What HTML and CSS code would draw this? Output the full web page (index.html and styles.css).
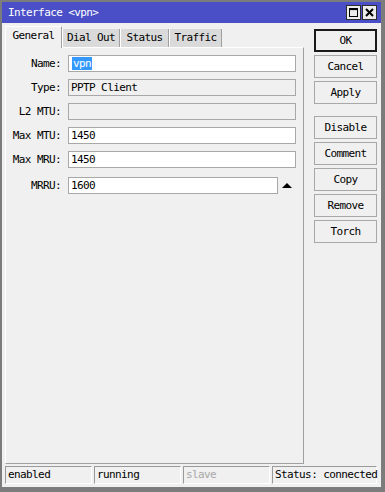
FILE: index.html
```html
<!DOCTYPE html>
<html lang="en">
<head>
    <meta charset="UTF-8">
    <title>Interface &lt;vpn&gt;</title>
    <link rel="stylesheet" href="styles.css">
</head>
<body>
    <div class="window">
        <div class="titlebar">
            <span class="title">Interface &lt;vpn&gt;</span>
            <span class="tb-btn">
                <svg width="13" height="13" viewBox="0 0 13 13">
                    <rect x="2.5" y="2.5" width="8" height="8" fill="none" stroke="#000" stroke-width="1"/>
                    <line x1="2" y1="3.5" x2="11" y2="3.5" stroke="#000" stroke-width="1.2"/>
                </svg>
            </span>
            <span class="tb-btn">
                <svg width="13" height="13" viewBox="0 0 13 13">
                    <path d="M3 3 L10 10 M10 3 L3 10" stroke="#000" stroke-width="2"/>
                </svg>
            </span>
        </div>
        <div class="content">
            <div class="main">
                <div class="left">
                    <div class="tabs">
                        <div class="tab active">General</div>
                        <div class="tab">Dial Out</div>
                        <div class="tab">Status</div>
                        <div class="tab">Traffic</div>
                    </div>
                    <div class="panel">
                        <div class="form">
                            <label>Name:</label>
                            <div class="field"><span class="sel">vpn</span></div>
                            <label>Type:</label>
                            <div class="field ro">PPTP Client</div>
                            <label>L2 MTU:</label>
                            <div class="field ro"></div>
                            <label>Max MTU:</label>
                            <div class="field">1450</div>
                            <label>Max MRU:</label>
                            <div class="field">1450</div>
                            <label class="gap">MRRU:</label>
                            <div class="gap mrru">
                                <div class="field">1600</div>
                                <span class="arrow-box"><span class="arrow"></span></span>
                            </div>
                        </div>
                    </div>
                </div>
                <div class="buttons">
                    <button class="btn default">OK</button>
                    <button class="btn">Cancel</button>
                    <button class="btn">Apply</button>
                    <button class="btn group">Disable</button>
                    <button class="btn">Comment</button>
                    <button class="btn">Copy</button>
                    <button class="btn">Remove</button>
                    <button class="btn">Torch</button>
                </div>
            </div>
            <div class="statusbar">
                <div class="cell">enabled</div>
                <div class="cell">running</div>
                <div class="cell dim">slave</div>
                <div class="cell wide">Status: connected</div>
            </div>
        </div>
    </div>
</body>
</html>
```

FILE: styles.css
```css
body {
    margin: 0;
    font-family: "DejaVu Sans Mono", "Liberation Mono", monospace;
    font-size: 11px;
    letter-spacing: -0.6px;
    color: #000;
    background: #fff;
}
.window {
    width: 385px;
    height: 492px;
    box-sizing: border-box;
    border: 2px solid #7c7c7c;
    border-right-width: 4px;
    border-bottom-width: 5px;
    background: #f0f0f0;
    display: flex;
    flex-direction: column;
}
.titlebar {
    height: 21px;
    background: #4b4fc7;
    color: #fff;
    display: flex;
    align-items: center;
    gap: 1px;
    padding: 0 4px 0 6px;
}
.title {
    margin-right: auto;
}
.tb-btn {
    width: 15px;
    height: 15px;
    box-sizing: border-box;
    border: 1px solid #2e2e2e;
    background: #ececec;
    display: flex;
}
.content {
    flex: 1;
    display: flex;
    flex-direction: column;
    padding: 3px 4px 3px 3px;
}
.main {
    flex: 1;
    display: flex;
    gap: 10px;
}
.left {
    width: 299px;
    display: flex;
    flex-direction: column;
}
.tabs {
    height: 21px;
    display: flex;
    align-items: flex-end;
}
.tab {
    height: 18px;
    box-sizing: border-box;
    line-height: 17px;
    background: #dadada;
    border-left: 1px solid #fff;
    border-right: 1px solid #a0a0a0;
    text-align: center;
}
.tab:nth-child(2) { width: 58px; }
.tab:nth-child(3) { width: 49px; }
.tab:nth-child(4) { width: 53px; }
.tab.active {
    width: 57px;
    height: 22px;
    line-height: 18px;
    background: #f0f0f0;
    border-top: 1px solid #fff;
    margin-bottom: -1px;
    position: relative;
    z-index: 1;
}
.panel {
    flex: 1;
    border: 1px solid;
    border-color: #fff #a0a0a0 #a0a0a0 #fff;
    padding: 7px 7px 0 0;
}
.form {
    display: grid;
    grid-template-columns: 55px 1fr;
    column-gap: 7px;
    row-gap: 7px;
    align-items: center;
}
.form label {
    text-align: right;
}
.field {
    height: 17px;
    box-sizing: border-box;
    border: 1px solid #a8a8a8;
    background: #fff;
    padding: 0 2px;
    line-height: 15px;
    white-space: nowrap;
}
.field.ro {
    background: #f0f0f0;
}
.sel {
    background: #3399ff;
    color: #fff;
    padding: 0 1px;
    margin-left: 1px;
}
.gap {
    margin-top: 2px;
}
.mrru {
    display: flex;
}
.mrru .field {
    flex: 1;
}
.arrow-box {
    width: 18px;
    display: flex;
    align-items: center;
    justify-content: center;
}
.arrow {
    width: 0;
    height: 0;
    border-left: 5px solid transparent;
    border-right: 5px solid transparent;
    border-bottom: 5px solid #000;
}
.buttons {
    width: 63px;
    display: flex;
    flex-direction: column;
    gap: 3px;
    padding-top: 3px;
}
.btn {
    height: 23px;
    margin: 0;
    padding: 0;
    font: inherit;
    letter-spacing: inherit;
    color: #000;
    background: #f0f0f0;
    border: 1px solid #a8a8a8;
    text-align: center;
}
.btn.default {
    border: 2px solid #1a1a1a;
}
.btn.group {
    margin-top: 9px;
}
.statusbar {
    height: 18px;
    margin-top: 2px;
    display: flex;
    gap: 2px;
}
.cell {
    width: 87px;
    box-sizing: border-box;
    border: 1px solid;
    border-color: #9a9a9a #fff #fff #9a9a9a;
    padding-left: 2px;
    line-height: 16px;
    white-space: nowrap;
}
.cell.dim {
    color: #a8a8a8;
}
.cell.wide {
    flex: 1;
}
```
